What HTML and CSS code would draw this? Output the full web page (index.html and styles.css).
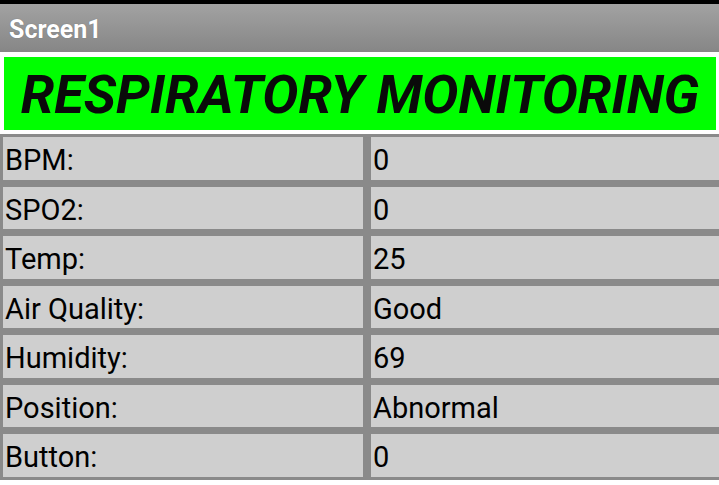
FILE: index.html
```html
<!DOCTYPE html>
<html lang="en">
<head>
    <meta charset="UTF-8" />
    <meta name="viewport" content="width=device-width, initial-scale=1.0"/>
    <title>Screen1</title>
    <link rel="stylesheet" href="styles.css">
</head>
<body>
    <div class="status"></div>
    <div class="titlebar">Screen1</div>

    <div class="banner">
        <h1>RESPIRATORY MONITORING</h1>
    </div>

    <div class="readings">
        <div class="cell">BPM:</div>
        <div class="cell" id="bpm">0</div>

        <div class="cell">SPO2:</div>
        <div class="cell" id="spo2">0</div>

        <div class="cell">Temp:</div>
        <div class="cell" id="temp">25</div>

        <div class="cell">Air Quality:</div>
        <div class="cell" id="air">Good</div>

        <div class="cell">Humidity:</div>
        <div class="cell" id="humidity">69</div>

        <div class="cell">Position:</div>
        <div class="cell" id="position">Abnormal</div>

        <div class="cell">Button:</div>
        <div class="cell" id="button">0</div>
    </div>
</body>
</html>
```

FILE: styles.css
```css
body {
    margin: 0;
    background: white;
    font-family: Roboto, 'Noto Sans', sans-serif;
    overflow: hidden;
}
.status {
    height: 4px;
    background: #000;
}
.titlebar {
    height: 48px;
    line-height: 51px;
    padding-left: 9px;
    background: linear-gradient(#a2a2a2, #868686);
    color: white;
    font-size: 25px;
    font-weight: 700;
    text-shadow: 0 0 1px rgba(0,0,0,0.3);
}
.banner {
    padding: 5px 3px 4px 4px;
}
.banner h1 {
    margin: 0;
    height: 73px;
    line-height: 76px;
    background: #00ff00;
    color: #0a0a0a;
    text-align: center;
    font-size: 54px;
    font-weight: 700;
    font-style: italic;
}
.readings {
    display: grid;
    grid-template-columns: 360px 1fr;
    grid-auto-rows: 42.5px;
    column-gap: 8px;
    row-gap: 7px;
    padding: 3px 0 3px 3px;
    background: #8a8a8a;
}
.cell {
    background: #cfcfcf;
    color: #000;
    font-size: 29px;
    line-height: 46px;
    padding-left: 2px;
}
```
